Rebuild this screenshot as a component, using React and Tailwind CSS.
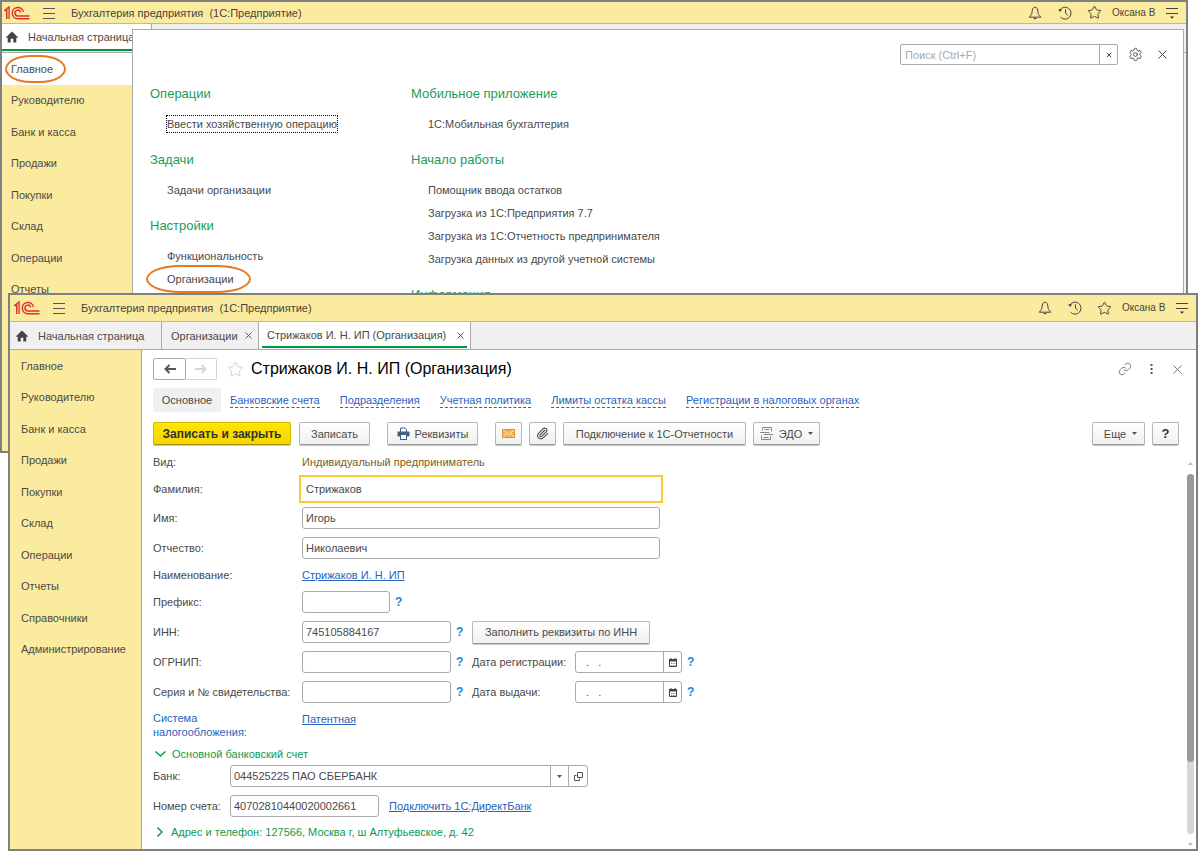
import React, { useState } from 'react';
import { Star, Settings, X, Link, Paperclip } from 'lucide-react';

const sections = [
  'Главное',
  'Руководителю',
  'Банк и касса',
  'Продажи',
  'Покупки',
  'Склад',
  'Операции',
  'Отчеты',
  'Справочники',
  'Администрирование',
];

const menuColumns = [
  [
    { title: 'Операции', items: ['Ввести хозяйственную операцию'] },
    { title: 'Задачи', items: ['Задачи организации'] },
    { title: 'Настройки', items: ['Функциональность', 'Организации'] },
  ],
  [
    { title: 'Мобильное приложение', items: ['1С:Мобильная бухгалтерия'] },
    {
      title: 'Начало работы',
      items: [
        'Помощник ввода остатков',
        'Загрузка из 1С:Предприятия 7.7',
        'Загрузка из 1С:Отчетность предпринимателя',
        'Загрузка данных из другой учетной системы',
      ],
    },
    { title: 'Информация', items: [] },
  ],
];

const formLinks = [
  'Банковские счета',
  'Подразделения',
  'Учетная политика',
  'Лимиты остатка кассы',
  'Регистрации в налоговых органах',
];

const Logo = () => (
  <svg width="26" height="14" viewBox="0 0 26 14" fill="none" stroke="#e0322c" strokeWidth="1.5">
    <path d="M0.3 4.6 L5 1 V13 M0.3 4.6 H2.8 V13" />
    <path d="M3.9 2.5 V13" stroke="#f08a70" />
    <path d="M19.4 5.8 A5.6 5.6 0 1 0 13.8 12.7 H25.5" />
    <path d="M16.7 6.4 A2.9 2.9 0 1 0 13.8 9.9 H25.5" />
  </svg>
);

const Burger = () => (
  <svg width="12" height="12" viewBox="0 0 12 12" stroke="#555" strokeWidth="1">
    <path d="M0 1.5H12M0 6.5H12M0 11.5H12" />
  </svg>
);

const HomeIcon = () => (
  <svg width="12" height="12" viewBox="0 0 12 12" fill="#444" className="shrink-0">
    <path d="M6 0.5 L12 6.3 L11.2 7.1 L10.3 6.4 V11.5 H7.3 V7.8 H4.7 V11.5 H1.7 V6.4 L0.8 7.1 L0 6.3 Z" />
  </svg>
);

const BellIcon = () => (
  <svg width="14" height="14" viewBox="0 0 14 14" fill="none" stroke="#444">
    <path d="M7 1C4.8 1.6 4.2 3.4 4.1 5.5C4 8 3.2 9.2 1.2 11.2H12.8C10.8 9.2 10 8 9.9 5.5C9.8 3.4 9.2 1.6 7 1Z" />
    <path d="M5 12H9L7 13.6Z" fill="#444" stroke="none" />
  </svg>
);

const HistoryIcon = () => (
  <svg width="14" height="14" viewBox="0 0 14 14" fill="none" stroke="#444">
    <path d="M1.8 4.2A6 6 0 1 1 2.6 11.2" />
    <path d="M7.5 3.3V7.2L9.8 9.3" />
    <path d="M0 3.4L3.8 3L2.6 6Z" fill="#444" stroke="none" />
  </svg>
);

const PanelMenuIcon = () => (
  <svg width="12" height="12" viewBox="0 0 12 12">
    <path d="M0 1.5H12M0 6.5H12" stroke="#444" />
    <path d="M4 9.5H8L6 11.8Z" fill="#333" />
  </svg>
);

const Caret = () => (
  <svg width="5" height="3" viewBox="0 0 5 3" fill="#555">
    <path d="M0 0H5L2.5 3Z" />
  </svg>
);

const Arrow = ({ color, flip }) => (
  <svg width="12" height="10" viewBox="0 0 12 10" fill="none" stroke={color} strokeWidth="2" className={flip ? 'rotate-180' : ''}>
    <path d="M12 5H2M5.5 1L1.5 5L5.5 9" />
  </svg>
);

const PrinterIcon = () => (
  <svg width="13" height="13" viewBox="0 0 13 13">
    <path d="M3.5 5V1H8L9.5 2.5V5" fill="#fff" stroke="#3f6184" />
    <rect x="0.5" y="4.5" width="12" height="5" rx="1" fill="#3f6184" />
    <rect x="3.5" y="7.5" width="6" height="5" fill="#fff" stroke="#3f6184" />
  </svg>
);

const MailIcon = () => (
  <svg width="13" height="9" viewBox="0 0 13 9">
    <rect x="0.5" y="0.5" width="12" height="8" fill="#f0b454" stroke="#d8962c" />
    <path d="M1 1L6.5 5.5L12 1M1 8L4.8 4.3M12 8L8.2 4.3" fill="none" stroke="#fbe3ad" />
  </svg>
);

const EdoIcon = () => (
  <svg width="13" height="13" viewBox="0 0 13 13" fill="none" stroke="#888">
    <path d="M2.5 3.5V0.5H11.5V4.5M4.5 2.5H9.5" />
    <path d="M0 5.5H9.5M3.5 7.5H13" />
    <path d="M10.5 9V12.5H1.5V8.5M3.5 10.5H8.5" />
  </svg>
);

const CalendarIcon = () => (
  <svg width="8" height="9" viewBox="0 0 8 9">
    <path d="M0.5 1.5H7.5V8.5H0.5Z" fill="#fff" stroke="#444" />
    <path d="M0 1H8V3.5H0ZM1.5 0H2.5V1H1.5ZM5.5 0H6.5V1H5.5Z" fill="#444" />
    <path d="M2 5.5H6.5M2 7.5H6.5" stroke="#777" strokeDasharray="1 0.7" />
  </svg>
);

const OpenIcon = () => (
  <svg width="9" height="9" viewBox="0 0 9 9" fill="none" stroke="#555">
    <path d="M3.5 0.5H8.5V5.5H3.5ZM2.5 3.5H0.5V8.5H5.5V6.5" />
  </svg>
);

const TopBar = ({ className }) => (
  <header className={`flex items-center bg-[#fbeb9e] border-b border-[#c9bb77] pr-2 text-[#444] ${className}`}>
    <Logo />
    <button aria-label="Меню" className="ml-[13px]"><Burger /></button>
    <span className="ml-4 whitespace-pre">Бухгалтерия предприятия  (1С:Предприятие)</span>
    <div className="ml-auto flex items-center">
      <button aria-label="Оповещения"><BellIcon /></button>
      <button aria-label="История" className="ml-4"><HistoryIcon /></button>
      <button aria-label="Избранное" className="ml-[15px]"><Star size={15} strokeWidth={1.6} /></button>
      <span className="ml-[10px] w-[44px] text-[10px] whitespace-nowrap">Оксана В</span>
      <button aria-label="Сервис" className="ml-[10px]"><PanelMenuIcon /></button>
    </div>
  </header>
);

const MenuPanel = () => (
  <div className="absolute top-[27px] left-[130px] right-[2px] bottom-0 bg-white border border-[#aaa]">
    <div className="absolute top-[14px] right-[13px] flex items-center">
      <div className="flex w-[218px] h-[21px] rounded-xs border border-[#aaa]">
        <input aria-label="Поиск" placeholder="Поиск (Ctrl+F)" className="flex-1 min-w-0 px-1 outline-none placeholder:text-[#aaa]" />
        <button aria-label="Очистить" className="w-[18px] border-l border-[#aaa] flex items-center justify-center">
          <X size={8} strokeWidth={3} />
        </button>
      </div>
      <button aria-label="Настройка" className="ml-[10px]"><Settings size={15} strokeWidth={1.5} /></button>
      <button aria-label="Закрыть" className="ml-3"><X size={15} strokeWidth={1.6} /></button>
    </div>
    <div className="flex pt-[52px] pl-[17px]">
      {menuColumns.map((column, i) => (
        <div key={i} className="w-[261px] shrink-0">
          {column.map((group) => (
            <section key={group.title} className="mb-[13px]">
              <h2 className="h-6 leading-6 text-[13px] text-[#1a9d55]">{group.title}</h2>
              <ul className="mt-[6px] pl-[17px] whitespace-nowrap">
                {group.items.map((item) => (
                  <li key={item} className="h-[23px] flex items-center">
                    <a
                      href="#"
                      className={`relative ${item === 'Ввести хозяйственную операцию' ? 'outline-1 outline-dotted outline-black' : ''}`}
                    >
                      {item}
                      {item === 'Организации' && (
                        <span className="absolute -left-[21px] -right-[17px] -inset-y-[6px] rounded-[34px/14px] border-2 border-[#e57a20]" />
                      )}
                    </a>
                  </li>
                ))}
              </ul>
            </section>
          ))}
        </div>
      ))}
    </div>
  </div>
);

const BackWindow = () => (
  <div className="absolute top-0 left-0 right-3 h-[453px] overflow-hidden border-2 border-[#808080] bg-[#f0f0f0]">
    <TopBar className="h-[22px] pl-[2px]" />
    <div className="h-[29px] border-b border-[#aaa] flex">
      <div className="w-[150px] mb-px pl-1 flex items-center gap-[10px] bg-white border-r border-[#aaa] border-b-2 border-b-[#00963e] whitespace-nowrap">
        <HomeIcon />
        Начальная страница
      </div>
    </div>
    <nav className="w-[130px] h-full bg-[#fbeb9e]">
      <ul className="grid auto-rows-fr h-[315px]">
        {sections.map((name, i) => (
          <li key={name} className={`flex items-center pl-[9px] ${i === 0 ? 'bg-white' : ''}`}>
            <a href="#" className="relative">
              {name}
              {i === 0 && <span className="absolute -left-[6px] -right-[13px] -inset-y-[6px] rounded-[26px/14px] border-2 border-[#e57a20]" />}
            </a>
          </li>
        ))}
      </ul>
    </nav>
    <MenuPanel />
  </div>
);

const buttonTones = {
  plain: 'border-[#b8b8b8] border-b-[#999] from-white to-[#f0f0f0]',
  primary: 'border-[#d3b800] border-b-[#a89300] from-[#ffe500] to-[#f5d400] font-bold text-[12px] text-[#333]',
};

const Button = ({ tone = 'plain', className = '', children, ...rest }) => (
  <button
    className={`h-[23px] shrink-0 flex items-center justify-center rounded-xs border bg-linear-to-b shadow-[0_1px_0_#c8c8c8] whitespace-nowrap ${buttonTones[tone]} ${className}`}
    {...rest}
  >
    {children}
  </button>
);

const Row = ({ id, label, className = 'h-[30px]', children }) => (
  <div className={`flex items-center ${className}`}>
    <label htmlFor={id} className="w-[149px] shrink-0 whitespace-nowrap">{label}</label>
    {children}
  </div>
);

const Field = ({ className = '', ...rest }) => (
  <input className={`h-[22px] px-[3px] rounded-[3px] border border-[#aaa] bg-white ${className}`} {...rest} />
);

const Help = () => (
  <button type="button" aria-label="Справка" className="w-[21px] pl-[5px] text-left text-[12px] text-[#1f86cc] font-bold">?</button>
);

const DateField = ({ id, label }) => (
  <>
    <label htmlFor={id} className="w-[103px]">{label}</label>
    <div className="flex w-[107px] h-[22px] rounded-[3px] border border-[#aaa]">
      <input id={id} defaultValue="  .   ." className="flex-1 min-w-0 pl-1 outline-none" />
      <button type="button" aria-label="Выбрать дату" className="w-[18px] border-l border-[#aaa] flex items-center justify-center">
        <CalendarIcon />
      </button>
    </div>
    <Help />
  </>
);

const OrganizationForm = () => {
  const [surname, setSurname] = useState('Стрижаков');

  return (
    <form className="flex-1 min-w-0 flex flex-col pb-[6px]">
      <Row label="Вид:" className="h-6">
        <span className="text-[#806010]">Индивидуальный предприниматель</span>
      </Row>
      <Row id="surname" label="Фамилия:" className="h-[29px]">
        <input
          id="surname"
          value={surname}
          onChange={(e) => setSurname(e.target.value)}
          className="w-[358px] h-[22px] px-1 outline-2 outline-offset-1 outline-[#fbcb2e]"
        />
      </Row>
      <Row id="name" label="Имя:">
        <Field id="name" defaultValue="Игорь" className="w-[358px]" />
      </Row>
      <Row id="patronymic" label="Отчество:">
        <Field id="patronymic" defaultValue="Николаевич" className="w-[358px]" />
      </Row>
      <Row label="Наименование:" className="h-6">
        <a href="#" className="text-[#2a62bd] underline">Стрижаков И. Н. ИП</a>
      </Row>
      <Row id="prefix" label="Префикс:">
        <Field id="prefix" className="w-[88px]" />
        <Help />
      </Row>
      <Row id="inn" label="ИНН:">
        <Field id="inn" defaultValue="745105884167" className="w-[149px]" />
        <Help />
        <Button type="button" className="w-[178px]">Заполнить реквизиты по ИНН</Button>
      </Row>
      <Row id="ogrnip" label="ОГРНИП:">
        <Field id="ogrnip" className="w-[149px]" />
        <Help />
        <DateField id="regDate" label="Дата регистрации:" />
      </Row>
      <Row id="certificate" label="Серия и № свидетельства:">
        <Field id="certificate" className="w-[149px]" />
        <Help />
        <DateField id="issueDate" label="Дата выдачи:" />
      </Row>
      <div className="flex h-10 pt-1 leading-[14px] text-[#2a62bd]">
        <span className="w-[149px]">Система<br />налогообложения:</span>
        <a href="#" className="h-4 leading-4 underline">Патентная</a>
      </div>
      <button type="button" className="h-[14px] flex items-center gap-[6px] pl-[2px] text-[#0f9a48]">
        <svg width="11" height="6" viewBox="0 0 11 6" fill="none" stroke="currentColor" strokeWidth="1.5"><path d="M0.5 0.5L5.5 5L10.5 0.5" /></svg>
        Основной банковский счет
      </button>
      <div className="flex items-center h-[30px]">
        <label htmlFor="bank" className="w-[77px]">Банк:</label>
        <div className="flex w-[358px] h-[22px] rounded-[3px] border border-[#aaa]">
          <input id="bank" defaultValue="044525225 ПАО СБЕРБАНК" className="flex-1 min-w-0 px-[3px] outline-none" />
          <button type="button" aria-label="Выбрать банк" className="w-[18px] border-l border-[#aaa] flex items-center justify-center"><Caret /></button>
          <button type="button" aria-label="Открыть банк" className="w-[19px] border-l border-[#aaa] flex items-center justify-center"><OpenIcon /></button>
        </div>
      </div>
      <div className="flex items-center h-[30px]">
        <label htmlFor="account" className="w-[77px]">Номер счета:</label>
        <Field id="account" defaultValue="40702810440020002661" className="w-[149px]" />
        <a href="#" className="ml-[10px] text-[#2a62bd] underline">Подключить 1С:ДиректБанк</a>
      </div>
      <button type="button" className="h-[22px] flex items-center gap-2 pl-1 text-[#0f9a48]">
        <svg width="6" height="10" viewBox="0 0 6 10" fill="none" stroke="currentColor" strokeWidth="1.5"><path d="M0.5 0.5L5 5L0.5 9.5" /></svg>
        Адрес и телефон: 127566, Москва г, ш Алтуфьевское, д. 42
      </button>
    </form>
  );
};

const ScrollBar = () => (
  <div className="w-[7px] mr-[2px] pt-3 pb-[3px] flex flex-col items-center">
    <svg width="5" height="3" viewBox="0 0 5 3" fill="#bbb"><path d="M0 3H5L2.5 0Z" /></svg>
    <div className="mt-[9px] mb-[9px] w-full flex-1 rounded-full bg-[#d6d6d6]">
      <div className="h-4/5 rounded-full bg-[#999]" />
    </div>
    <svg width="5" height="3" viewBox="0 0 5 3" fill="#bbb"><path d="M0 0H5L2.5 3Z" /></svg>
  </div>
);

const FrontWindow = () => (
  <div className="relative mt-[293px] ml-2 mr-[2px] border-2 border-[#808080] bg-white">
    <TopBar className="h-[27px] pl-1" />
    <div className="h-[28px] flex bg-[#f0f0f0] border-b border-[#aaa] whitespace-nowrap">
      <div className="w-[152px] pl-[6px] flex items-center gap-[10px] border-r border-[#aaa]">
        <HomeIcon />
        Начальная страница
      </div>
      <div className="w-[97px] pr-1 pl-[9px] flex items-center justify-between border-r border-[#aaa]">
        Организации
        <button aria-label="Закрыть вкладку"><X size={11} strokeWidth={2} /></button>
      </div>
      <div className="w-[212px] px-[3px] flex bg-white border-r border-[#aaa]">
        <div className="flex-1 mb-px pl-[5px] pr-px pt-[2px] flex items-center justify-between border-b-2 border-[#00963e]">
          Стрижаков И. Н. ИП (Организация)
          <button aria-label="Закрыть вкладку"><X size={11} strokeWidth={2} /></button>
        </div>
      </div>
    </div>
    <div className="flex">
      <nav className="w-[132px] shrink-0 bg-[#fbeb9e] border-r border-[#b5aa78]">
        <ul className="grid auto-rows-fr h-[315px]">
          {sections.map((name) => (
            <li key={name} className="flex items-center pl-[11px]"><a href="#">{name}</a></li>
          ))}
        </ul>
      </nav>
      <main className="flex-1 min-w-0 pl-[11px] pt-2">
        <div className="flex items-center h-[22px] pr-[11px]">
          <button aria-label="Назад" className="w-[33px] h-[22px] rounded-xs border border-[#aaa] flex items-center justify-center"><Arrow color="#555" /></button>
          <button aria-label="Вперед" className="w-[31px] h-[22px] rounded-r-xs border border-l-0 border-[#d5d5d5] flex items-center justify-center"><Arrow color="#d5d5d5" flip /></button>
          <button aria-label="В избранное" className="ml-[10px] text-[#ccc]"><Star size={17} strokeWidth={1.3} /></button>
          <h1 className="ml-[7px] text-[16px] leading-5 text-black whitespace-nowrap">Стрижаков И. Н. ИП (Организация)</h1>
          <div className="ml-auto flex items-center text-[#777]">
            <button aria-label="Ссылка"><Link size={14} strokeWidth={1.6} /></button>
            <button aria-label="Еще действия" className="ml-[18px]">
              <svg width="3" height="10" viewBox="0 0 3 10" fill="#555"><path d="M0.5 0H2.5V2H0.5ZM0.5 4H2.5V6H0.5ZM0.5 8H2.5V10H0.5Z" /></svg>
            </button>
            <button aria-label="Закрыть" className="ml-[17px]"><X size={15} strokeWidth={1.6} /></button>
          </div>
        </div>
        <nav className="mt-2 flex items-center h-6 whitespace-nowrap">
          <span className="h-6 w-[68px] leading-6 text-center bg-[#f0f0f0] rounded-xs">Основное</span>
          <div className="ml-[9px] flex gap-5">
            {formLinks.map((link) => (
              <a key={link} href="#" className="leading-[14px] text-[#2a62bd] border-b border-dashed border-[#2a62bd]">{link}</a>
            ))}
          </div>
        </nav>
        <div className="mt-[10px] mb-[5px] mr-[17px] flex items-center">
          <Button tone="primary" className="w-[138px]">Записать и закрыть</Button>
          <Button className="ml-2 w-[71px]">Записать</Button>
          <Button className="ml-[17px] w-[91px] gap-[5px]"><PrinterIcon />Реквизиты</Button>
          <Button aria-label="Письмо" className="ml-[17px] w-[27px]"><MailIcon /></Button>
          <Button aria-label="Файлы" className="ml-[7px] w-[27px]"><Paperclip size={13} /></Button>
          <Button className="ml-[7px] w-[183px]">Подключение к 1С-Отчетности</Button>
          <Button className="ml-[7px] w-[67px] gap-[6px]"><EdoIcon />ЭДО<Caret /></Button>
          <Button className="ml-auto w-[53px] gap-[6px] pl-1">Еще<Caret /></Button>
          <Button aria-label="Справка" className="ml-[7px] w-[27px] text-[13px] font-bold text-[#333]">?</Button>
        </div>
        <div className="flex">
          <OrganizationForm />
          <ScrollBar />
        </div>
      </main>
    </div>
  </div>
);

const App = () => (
  <div className="relative min-h-screen overflow-hidden bg-white font-['Liberation_Sans',Arial,sans-serif] text-[11px] leading-4 text-[#4a4a4a]">
    <BackWindow />
    <FrontWindow />
  </div>
);

export default App;
